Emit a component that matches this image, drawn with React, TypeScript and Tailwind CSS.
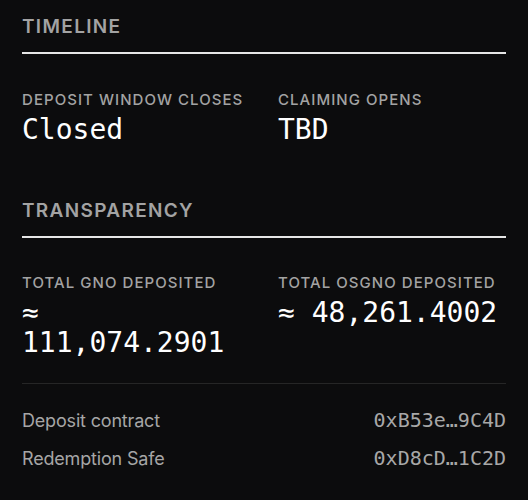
import React from "react";

const mono = "font-['DejaVu_Sans_Mono',monospace]";
const sans = "font-['Inter',sans-serif]";

interface StatProps {
  label: string;
  value: string;
}

const Stat: React.FC<StatProps> = ({ label, value }) => (
  <div className="flex flex-col gap-[5px]">
    <div className={`${sans} text-[15px] leading-5 font-medium tracking-[0.07em] uppercase text-[#a3a3a3]`}>
      {label}
    </div>
    <div className={`${mono} text-[28px] leading-[30px] text-white`}>{value}</div>
  </div>
);

const SectionTitle: React.FC<{ title: string }> = ({ title }) => (
  <div>
    <div className={`${sans} text-[19px] leading-6 font-semibold tracking-[0.07em] uppercase text-[#a3a3a3] pb-[13px]`}>
      {title}
    </div>
    <div className="h-[2px] bg-[#e6e6e6]" />
  </div>
);

const AddressRow: React.FC<{ label: string; address: string }> = ({ label, address }) => (
  <div className="flex items-baseline justify-between">
    <span className={`${sans} text-[18px] leading-6 tracking-[-0.01em] text-[#a6a6a6]`}>{label}</span>
    <span className={`${mono} text-[20px] leading-6 text-[#a8a8a8]`}>{address}</span>
  </div>
);

export default function App() {
  return (
    <div className="w-[528px] h-[500px] bg-[#0c0c0d] px-[22px] pt-[15px] overflow-hidden">
      {/* Timeline */}
      <SectionTitle title="Timeline" />
      <div className="grid grid-cols-2 gap-x-7 mt-9">
        <Stat label="Deposit window closes" value="Closed" />
        <Stat label="Claiming opens" value="TBD" />
      </div>

      {/* Transparency */}
      <div className="mt-[54px]">
        <SectionTitle title="Transparency" />
      </div>
      <div className="grid grid-cols-2 gap-x-7 mt-[35px]">
        <Stat label="Total GNO deposited" value="≈ 111,074.2901" />
        <Stat label="Total osGNO deposited" value="≈ 48,261.4002" />
      </div>

      <div className="h-px bg-[#262626] mt-[25px]" />

      <div className="flex flex-col gap-[13px] mt-6">
        <AddressRow label="Deposit contract" address="0xB53e…9C4D" />
        <AddressRow label="Redemption Safe" address="0xD8cD…1C2D" />
      </div>
    </div>
  );
}
